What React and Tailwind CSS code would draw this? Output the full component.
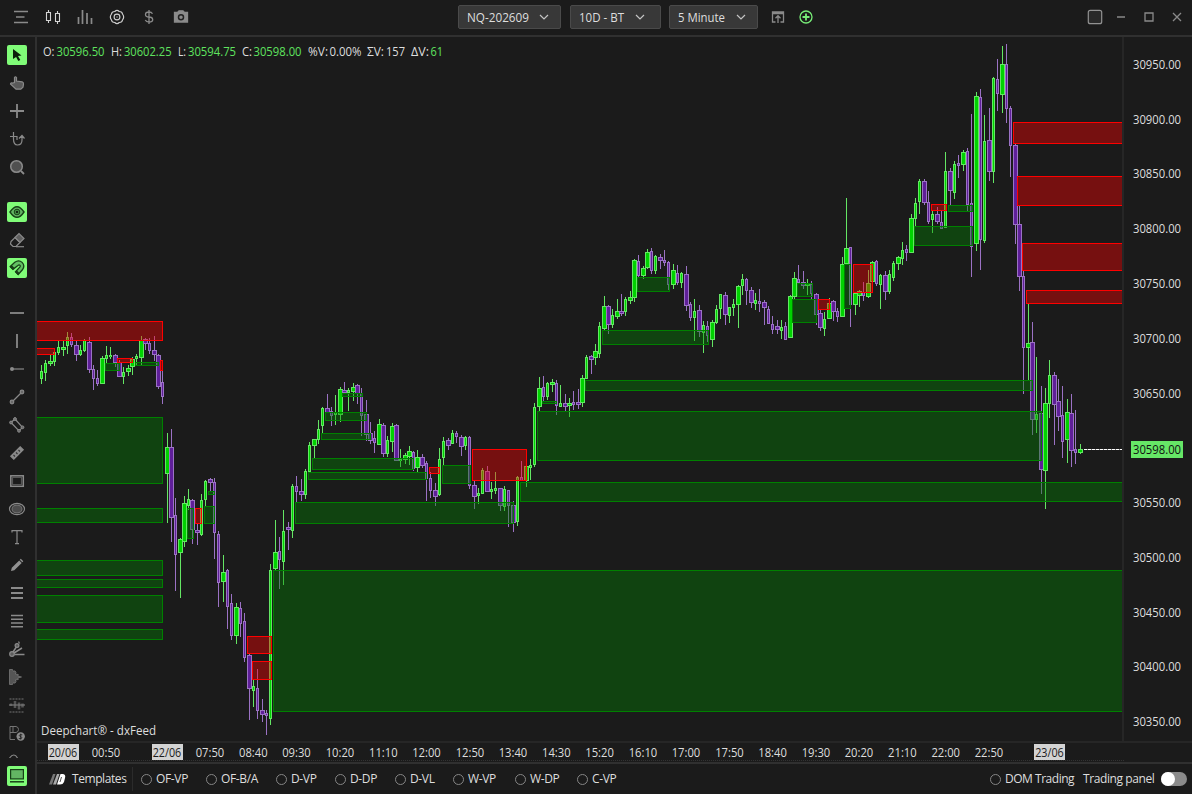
import React, { useState } from 'react';

// kind high top bottom low -- g = up, p = down, capital letter = wide body
const RAW_CANDLES = `
g 365 371 379 384,g 360 363 373 381,G 355 361 364 366,g 352 352 362 366,g 341 347 353 355,G 341 347 350 356,
g 332 337 346 354,p 333 337 345 347,P 341 345 355 361,g 345 350 355 356,g 339 340 351 352,P 337 342 370 373,
p 365 369 379 390,p 370 378 384 386,G 356 358 384 384,g 346 355 359 363,g 347 355 357 359,P 354 355 363 367,
P 360 362 377 377,g 367 372 377 384,G 365 368 372 376,G 357 359 367 375,g 354 356 359 366,G 336 340 358 365,
P 338 339 344 350,p 338 343 351 354,P 336 350 355 361,P 354 355 387 389,p 370 382 397 404,G 433 447 474 523,
P 429 447 518 542,p 498 515 555 591,G 538 539 553 598,G 496 503 542 547,g 489 499 506 510,P 499 500 530 544,
P 523 530 533 545,g 494 500 535 536,g 480 481 500 506,P 478 479 483 491,p 478 482 533 559,p 531 534 583 607,
G 555 572 582 602,p 569 570 607 629,p 594 603 636 640,G 603 607 636 644,p 602 608 624 637,p 613 621 658 662,
P 653 655 689 720,g 680 686 691 707,p 669 688 711 719,P 699 710 715 722,p 710 713 716 735,g 564 570 719 725,
G 520 552 569 570,p 537 551 560 589,g 510 531 562 585,P 522 527 530 550,g 484 486 531 538,p 476 486 492 502,
P 479 491 495 501,g 469 471 495 499,g 442 445 472 472,G 439 439 446 458,g 420 429 440 444,g 407 408 426 433,
P 394 408 413 413,p 407 411 416 426,g 395 412 415 425,G 387 389 415 422,P 382 390 393 394,g 388 390 393 411,
G 383 387 392 401,P 384 385 394 404,p 388 393 416 436,P 400 414 435 441,P 422 433 441 444,p 431 438 443 453,
G 419 424 445 445,P 423 425 454 457,g 436 440 454 457,G 423 426 442 452,P 424 425 461 461,g 449 459 461 467,
G 453 455 460 464,G 446 451 457 465,p 451 452 469 471,G 450 457 468 472,P 454 457 466 468,p 461 463 479 501,
p 472 478 491 498,P 483 490 497 506,g 448 459 495 496,g 437 441 458 465,P 438 440 446 450,g 430 433 444 444,
p 431 433 437 443,P 435 437 447 456,g 436 437 446 450,p 436 437 486 489,P 481 485 497 509,g 488 493 496 504,
g 468 470 494 494,P 466 471 492 492,g 482 489 492 499,g 472 488 491 494,P 488 488 506 511,g 486 489 507 511,
p 490 490 506 527,P 501 505 523 532,g 476 477 522 526,p 461 477 481 481,G 466 466 481 487,g 459 465 468 480,
g 403 407 465 467,G 377 388 407 411,p 376 387 397 401,g 382 383 397 400,G 379 382 385 392,p 380 383 406 415,
g 385 403 407 407,P 394 403 407 411,G 398 403 406 417,p 391 402 405 410,P 389 402 405 409,G 375 378 403 407,
g 355 357 379 379,P 355 356 360 374,G 344 351 358 365,g 322 326 354 358,G 296 306 329 330,P 305 306 325 334,
g 309 315 325 328,G 299 311 317 319,P 294 311 314 316,g 297 299 312 316,G 291 297 301 304,G 259 260 298 302,
p 255 261 276 278,G 266 268 276 279,G 249 252 268 269,p 248 251 271 274,g 255 256 271 274,P 254 257 261 269,
p 250 260 263 266,p 261 262 285 290,G 264 270 285 289,p 265 273 283 285,g 272 273 283 288,P 266 274 306 311,
p 302 304 318 321,g 299 311 318 341,P 305 310 332 337,g 321 325 333 353,p 321 326 336 342,G 320 322 340 347,
g 305 309 323 324,g 294 294 309 319,P 292 295 315 325,g 307 307 316 323,g 299 304 308 316,G 285 286 305 328,
g 274 279 286 295,p 278 279 291 305,P 287 290 303 308,g 293 300 304 310,p 289 301 304 312,P 300 302 308 325,
p 306 309 324 324,p 316 324 330 334,P 320 326 330 334,g 320 327 331 339,p 322 326 340 340,G 295 296 338 338,
G 272 278 297 299,p 265 279 283 283,P 271 282 286 289,G 279 283 286 295,p 281 284 294 299,P 293 294 315 325,
P 310 313 328 331,g 312 319 329 336,G 298 303 319 319,P 300 301 312 321,p 308 311 317 322,G 257 264 317 317,
G 198 248 264 264,p 247 247 305 327,G 292 293 305 315,G 290 291 296 307,p 282 292 296 301,G 270 283 297 298,
G 261 262 282 282,p 260 261 284 286,g 274 275 285 309,P 271 275 292 300,g 270 274 292 294,g 261 263 278 281,
G 256 257 264 270,g 242 250 259 265,p 245 249 253 261,G 214 218 253 253,g 198 203 219 226,g 179 181 202 214,
P 179 181 203 205,p 191 202 222 224,g 211 214 220 233,P 207 214 222 224,p 211 222 229 229,g 152 171 228 228,
P 168 171 191 205,g 161 164 193 199,p 155 163 166 178,G 150 152 165 171,p 148 151 205 211,p 114 203 247 277,
G 92 96 244 251,p 89 97 240 270,g 115 141 241 243,P 108 140 172 181,g 77 78 172 183,p 59 79 94 111,
G 46 64 95 113,p 44 64 109 123,p 106 108 146 177,P 144 145 225 244,P 206 224 277 291,p 271 276 348 394,
G 304 343 348 380,P 322 342 420 435,g 357 414 420 433,P 386 413 470 494,G 388 403 471 509,g 360 375 404 418,
P 372 375 405 445,P 379 401 417 431,p 386 415 442 458,G 399 412 440 463,P 394 413 451 467,p 410 449 453 464,
G 444 449 453 454`;

const CANDLES = RAW_CANDLES.trim().split(',').map((row, i) => {
  const [kind, ...v] = row.trim().split(' ');
  const [high, top, bottom, low] = v.map(Number);
  return {
    x: Math.round(41.05 + i * 4.327),
    half: kind === kind.toUpperCase() ? 2 : 1,
    up: kind.toLowerCase() === 'g',
    high, top, bottom, low,
  };
});

// x1, y1, x2, y2
const GREEN_ZONES = [
  [36, 417, 163, 484], [36, 508, 163, 523], [36, 560, 163, 576], [36, 579, 163, 588],
  [36, 595, 163, 623], [36, 629, 163, 640], [105, 363, 120, 371], [135, 362, 159, 366],
  [187, 508, 194, 539], [204, 506, 215, 524], [208, 491, 215, 495],
  [273, 570, 1124, 712], [295, 502, 514, 524], [308, 472, 427, 480], [312, 458, 414, 470],
  [321, 433, 371, 440], [325, 412, 367, 421], [342, 393, 363, 397], [442, 465, 471, 484],
  [520, 482, 1124, 502], [537, 411, 1042, 461], [542, 401, 557, 404], [585, 380, 1033, 391],
  [602, 330, 709, 345], [637, 277, 670, 292], [792, 299, 817, 323], [797, 283, 813, 297],
  [844, 264, 851, 309], [914, 226, 973, 246], [948, 205, 973, 212],
];

const RED_ZONES = [
  [36, 321, 163, 341], [36, 348, 55, 355], [117, 358, 133, 363], [160, 360, 163, 371],
  [195, 508, 202, 524], [247, 636, 272, 654], [252, 661, 272, 680], [429, 467, 440, 474],
  [472, 449, 527, 481], [818, 299, 830, 310], [853, 264, 873, 293], [931, 204, 947, 211],
  [1013, 122, 1124, 144], [1017, 176, 1124, 206], [1022, 243, 1124, 271], [1026, 290, 1124, 304],
];

const OHLC = [
  ['O:', 43, 11.5, 'w'], ['30596.50', 56.5, 48, 'g'],
  ['H:', 111, 11, 'w'], ['30602.25', 124, 47.5, 'g'],
  ['L:', 178, 8, 'w'], ['30594.75', 188, 48, 'g'],
  ['C:', 242, 10, 'w'], ['30598.00', 253.5, 48, 'g'],
  ['%V:', 308, 20, 'w'], ['0.00%', 329.5, 32, 'w'],
  ['ΣV:', 367, 17, 'w'], ['157', 386, 19, 'w'],
  ['ΔV:', 411, 18, 'w'], ['61', 430.5, 12.5, 'g'],
];

const PRICES = Array.from({ length: 13 }, (_, i) => 30950 - i * 50).filter((p) => p !== 30600);

const TIMES = [
  ['20/06', 63, true], ['00:50', 106], ['22/06', 167, true], ['07:50', 210], ['08:40', 253.3],
  ['09:30', 296.5], ['10:20', 340], ['11:10', 383.3], ['12:00', 426.5], ['12:50', 470],
  ['13:40', 513], ['14:30', 556.3], ['15:20', 599.6], ['16:10', 643], ['17:00', 686],
  ['17:50', 729.5], ['18:40', 772.6], ['19:30', 816], ['20:20', 859], ['21:10', 902.4],
  ['22:00', 945.7], ['22:50', 989], ['23/06', 1049.500, true],
];

const TEMPLATES = [
  ['OF-VP', 'w-[65px]'], ['OF-B/A', 'w-[70px]'], ['D-VP', 'w-[59px]'], ['D-DP', 'w-[60px]'],
  ['D-VL', 'w-[58px]'], ['W-VP', 'w-[62px]'], ['W-DP', 'w-[62px]'], ['C-VP', 'w-[60px]'],
];

const Label = ({ width, children, ...props }) => (
  <text textLength={width} lengthAdjust="spacingAndGlyphs" {...props}>{children}</text>
);

const Zone = ({ box: [x1, y1, x2, y2], color }) => (
  <rect
    x={x1 + 0.5}
    y={y1 + 0.5}
    width={x2 - x1 - 1}
    height={y2 - y1 - 1}
    fill={color}
    fillOpacity="0.4"
    stroke={color}
  />
);

const Candle = ({ c }) => (
  <g>
    <rect x={c.x} y={c.high} width="1" height={c.low - c.high} fill={c.up ? '#64e664' : '#9b72c4'} />
    <rect
      x={c.x - c.half}
      y={c.top}
      width={c.half * 2 + 1}
      height={c.bottom - c.top}
      fill={c.up ? '#64e664' : '#9b72c4'}
    />
    <rect
      x={c.x - c.half + 1}
      y={c.top + 1}
      width={c.half * 2 - 1}
      height={Math.max(c.bottom - c.top - 2, 1)}
      fill={c.up ? '#00d200' : '#5f1f99'}
    />
  </g>
);

const Chart = () => (
  <svg className="block w-[1085px] h-[704px] shrink-0" viewBox="37 37 1085 704">
    <g shapeRendering="crispEdges">
      {CANDLES.map((c) => <Candle key={c.x} c={c} />)}
      {GREEN_ZONES.map((z) => <Zone key={z.join()} box={z} color="#008000" />)}
      {RED_ZONES.map((z) => <Zone key={z.join()} box={z} color="#ff0000" />)}
      <path d="M1084 449.5H1122" stroke="#777" />
      <path d="M1084 449.5H1122" stroke="#fff" strokeDasharray="3 1" />
    </g>
    {OHLC.map(([text, x, w, tone]) => (
      <Label key={x} x={x} y="56" width={w} className={tone === 'g' ? 'fill-[#5fe35f]' : 'fill-[#dedede]'}>
        {text}
      </Label>
    ))}
    <Label x="41" y="735" width="115" className="fill-[#dedede]">Deepchart® - dxFeed</Label>
  </svg>
);

const PriceAxis = () => (
  <svg className="block w-[68px] h-[704px] shrink-0" viewBox="1124 37 68 704">
    {PRICES.map((p) => (
      <Label key={p} x="1133" y={Math.round(68.85 + (30950 - p) * 1.0955)} width="48" className="fill-[#dedede]">
        {p.toFixed(2)}
      </Label>
    ))}
    <rect x="1131" y="441" width="52" height="17" fill="#66e666" />
    <Label x="1133" y="454" width="48" className="fill-[#111]">30598.00</Label>
  </svg>
);

const TimeAxis = () => (
  <svg className="block w-[1155px] h-[19px]" viewBox="37 743 1155 19">
    {TIMES.map(([t, x, day]) => (
      <g key={t}>
        {day && <rect x={Math.round(x - 15.5)} y="744" width="31" height="16" fill="#d3d3d3" />}
        <Label x={x - 14.3} y="757" width="28.6" className={day ? 'fill-[#1b1b1b]' : 'fill-[#dedede]'}>
          {t}
        </Label>
      </g>
    ))}
    <path d="M37 760.5H1124" stroke="#333" strokeDasharray="1 1" />
  </svg>
);

const Icon = ({ children, active }) => (
  <div className="flex h-7 w-full shrink-0 items-center justify-center">
    <div className={`h-5 w-5 rounded-[2px] ${active ? 'bg-[#80fc78]' : ''}`}>
      <svg
        viewBox="0 0 20 20"
        className="block h-5 w-5"
        fill="none"
        stroke={active ? '#174017' : '#8a8a8a'}
        strokeWidth="1.2"
      >
        {children}
      </svg>
    </div>
  </div>
);

const Sidebar = () => (
  <div className="flex w-[37px] shrink-0 flex-col border-r-2 border-[#303030] pr-px">
    <div className="flex h-[722px] flex-col overflow-hidden pt-1">
      <Icon active><path d="M6 4l8.500 6.500-3.500.6 2.300 3.900-2 1-2.200-4L6 14z" fill="#0b1f0b" stroke="none" /></Icon>
      <Icon>
        <path d="M7.500 9.500V4.500q.9-1.500 2 0V8l5.700.9q1.600.6 1.300 2.300l-.5 3-2.200 2H9L3.500 11q.2-1.500 1.900-.9z" fill="#5a5a5a" />
      </Icon>
      <Icon><path d="M10 3v14M3 10h14" strokeWidth="1.8" /></Icon>
      <Icon><path d="M3 7.500h7M6.500 3v7q0 6 4 6 4.500 0 4.500-5V7M12 9.500l3-3 2.500 3M10 7v4" /></Icon>
      <Icon>
        <circle cx="9.500" cy="9.500" r="5.800" fill="#505050" strokeWidth="1.5" />
        <path d="M14 14l3 3" strokeWidth="1.8" />
      </Icon>
      <div className="h-[17px] shrink-0" />
      <Icon active>
        <path d="M3 10q7-10.500 14 0-7 10.500-14 0z" fill="#63b563" strokeWidth="1.4" />
        <circle cx="10" cy="10" r="2.800" fill="#4c9c4c" strokeWidth="1" />
        <circle cx="10" cy="10" r="1.300" fill="#102a10" stroke="none" />
      </Icon>
      <Icon>
        <path d="M4 11.500l4-4 5 5-4 4H6l-2.500-2.500z" />
        <path d="M8 7.500l4-4 5 5-4 4z" fill="#606060" />
        <path d="M9 16.700h8" />
      </Icon>
      <Icon active>
        <path
          d="M3.200 8.500l4.600-4.200q4-3 7.300.1 3.300 3.400.3 7.400l-4.200 4.700-2.700-2.700 4.300-4.600q1-1.300.1-2-.8-.8-2 .2L6 11.300z"
          fill="#63c063"
          strokeWidth="1.300"
        />
        <path d="M3.700 8l3 3M9 13.300l2.800 2.800" strokeWidth="2.600" />
      </Icon>
      <div className="h-[17px] shrink-0" />
      <Icon><path d="M3 10h14" strokeWidth="1.8" /></Icon>
      <Icon><path d="M10 3v14" strokeWidth="1.8" /></Icon>
      <Icon><path d="M5 10h12" /><circle cx="5" cy="10" r="2" fill="#8a8a8a" stroke="none" /></Icon>
      <Icon>
        <path d="M5 15L15 5" />
        <g fill="#6a6a6a"><circle cx="5" cy="15" r="1.800" /><circle cx="15" cy="5" r="1.800" /></g>
      </Icon>
      <Icon>
        <path d="M8 4l7.500 8.300M4 7.500l8 8.300M8 4L4 7.500M15.500 12.300L12 15.800" />
        <g fill="#6a6a6a" strokeWidth="1">
          <circle cx="8" cy="4" r="1.400" /><circle cx="15.500" cy="12.300" r="1.400" />
          <circle cx="4" cy="7.500" r="1.400" /><circle cx="12" cy="15.800" r="1.400" />
        </g>
      </Icon>
      <Icon>
        <path d="M3.800 13.200l9.400-9.400 3 3-9.400 9.400z" fill="#8a8a8a" />
        <path d="M6.500 12l1.500 1.500M9 9.500l1.500 1.500M11.500 7L13 8.500" stroke="#333" />
      </Icon>
      <Icon><rect x="3.800" y="4.800" width="12.500" height="10.500" strokeWidth="1.500" /><path d="M5.500 6.500h9v7h-9z" stroke="#555" /></Icon>
      <Icon><ellipse cx="10" cy="10" rx="7.500" ry="5.700" /><ellipse cx="10" cy="10" rx="5" ry="3.800" fill="#4c4c4c" stroke="#707070" /></Icon>
      <Icon><path d="M5 5.500V3.600h10v1.900M10 3.600v13M8 16.600h4" /></Icon>
      <Icon><path d="M4 16l.8-3.200 7.400-7.400 2.500 2.500-7.400 7.400zM12.800 4.800l1-1 2.500 2.500-1 1z" fill="#929292" stroke="none" /></Icon>
      <Icon><path d="M4 5h12M4 10h12M4 15h12" strokeWidth="2" /></Icon>
      <Icon><path d="M4 4.500h12M4 8.200h12M4 12h12M4 15.700h12" strokeWidth="1.400" /></Icon>
      <Icon>
        <path d="M6 13l4-6M7 14l8-5M7.500 15.600H17.500" strokeWidth="1.500" />
        <circle cx="5" cy="15" r="2.300" fill="#5d5d5d" /><circle cx="10" cy="6.500" r="1.900" fill="#5d5d5d" /><path d="M11.500 2.500l1 2" />
      </Icon>
      <Icon>
        <path
          d="M2.500 2.500h3l1 2 1.500-.7 1 1.700-.7 1.500 3 .5-.5 1.500 3.700 1-3.700 1 .5 1.500-3 .5.7 1.500-1 1.700-1.500-.7-1 2h-3z"
          fill="#555"
          stroke="#777"
          strokeWidth=".8"
        />
      </Icon>
      <Icon>
        <path d="M2.500 4h15M2.500 17h15" strokeWidth="1" strokeDasharray="2 1" stroke="#777" />
        <path d="M4 8.500v2.500M8 6v7M12 7.500v7M15.500 8.500v4" stroke="#555" strokeWidth="2.600" />
        <path d="M2 10h16" stroke="#777" />
      </Icon>
      <Icon>
        <path d="M3 16.500V3.500h6q2.500.5 2.500 3T9 9.500H3M6 3.500v6M3 16.500h5" stroke="#747474" strokeWidth="1" />
        <circle cx="13.700" cy="13.500" r="4.200" fill="#8c8c8c" stroke="none" />
        <path d="M15.300 11.800h-2.500q-1.200 1 .2 1.700l1.200.3q1.300.9 0 1.800h-2.400M13.700 10.700v5.800" stroke="#222" strokeWidth=".9" />
      </Icon>
      <Icon><path d="M2.500 7q4.500-6 8 0" /></Icon>
    </div>
    <div className="flex h-9 items-center">
      <Icon active>
        <rect x="3.600" y="3.600" width="12.800" height="9.300" fill="#63b563" />
        <path d="M3 15.800h14" strokeWidth="1.500" />
      </Icon>
    </div>
  </div>
);

const Select = ({ label, textWidth, className }) => (
  <button
    type="button"
    className={`flex h-6 items-center justify-between rounded-[2px] border border-[#4a4a4a] bg-[#383838] pl-2 ${className}`}
  >
    <svg className="h-5 w-16 overflow-visible" viewBox="0 0 64 20">
      <Label x="0" y="15" width={textWidth} className="fill-[#dedede]">{label}</Label>
    </svg>
    <svg className="-ml-4 h-3 w-3 shrink-0" viewBox="0 0 12 12" fill="none" stroke="#c4c4c4" strokeWidth="1.2">
      <path d="M2 4l4 4 4-4" />
    </svg>
  </button>
);

const TopIcon = ({ children, color = '#8a8a8a' }) => (
  <svg className="h-5 w-5" viewBox="0 0 20 20" fill="none" stroke={color} strokeWidth="1.3">{children}</svg>
);

const TitleBar = () => (
  <header className="flex h-[37px] shrink-0 items-center border-b-2 border-[#303030] pb-px">
    <div className="flex w-[458px] gap-3 pl-[11px]">
      <TopIcon><path d="M3 4.500h14M5 10h8.500M3 15.500h14" /></TopIcon>
      <TopIcon color="#d4d4d4">
        <path d="M3.500 5.500h4v8h-4zM5.500 3v2.500M5.500 13.500V16M12.500 6.500h4v8h-4zM14.500 4v2.500M14.500 14.500V17" strokeWidth="1.1" />
      </TopIcon>
      <TopIcon><path d="M3.500 10v7M7.500 3v14M12 6v11M16.500 11v6" strokeWidth="1.700" /></TopIcon>
      <TopIcon color="#cfcfcf">
        <path
          d="M7.800 4.500Q10 2.300 12.200 4.500q3 0 3.300 2.500 2.300 3 0 6-.3 2.500-3.300 2.500-2.200 2.200-4.400 0-3 0-3.300-2.500-2.300-3 0-6 .3-2.500 3.300-2.500z"
          strokeWidth="1.200"
        />
        <circle cx="10" cy="10" r="2.900" strokeWidth="1.100" />
        <circle cx="10" cy="10" r=".8" fill="#999" stroke="none" />
      </TopIcon>
      <TopIcon><path d="M13.500 6.800Q12.500 5 10 5 6.500 5 6.500 7.500T10 10t3.700 2.500T10 15q-2.800 0-3.700-2M10 3v14" /></TopIcon>
      <TopIcon>
        <path d="M3.500 5.500h3L8 3.800h4l1.500 1.700h3V15h-13z" fill="#8b8b8b" />
        <circle cx="10" cy="10.200" r="2.500" stroke="#222" strokeWidth="1.500" />
      </TopIcon>
    </div>
    <div className="flex items-center gap-2">
      <Select label="NQ-202609" textWidth={62} className="w-[103px] pr-2.5" />
      <Select label="10D - BT" textWidth={45} className="ml-px w-[91px] pr-3.5" />
      <Select label="5 Minute" textWidth={47} className="w-[89px] pr-2.5" />
    </div>
    <div className="ml-2.5 flex gap-2">
      <TopIcon><path d="M7.500 15H4.500V5h11v10h-3M4.500 6.500h11M10 16V9M7.500 11.200L10 8.700l2.500 2.500" /></TopIcon>
      <TopIcon color="#78ee78"><circle cx="10" cy="10" r="6" /><path d="M10 6.500v7M6.500 10h7" strokeWidth="1.800" /></TopIcon>
    </div>
    <div className="ml-auto flex items-center gap-2 pr-[5px]">
      <svg className="-mr-0.5 h-5 w-5" viewBox="0 0 20 20" fill="#292929" stroke="#929292" strokeWidth="1.200">
        <rect x="3.300" y="3.300" width="13.400" height="13.400" rx="2" />
      </svg>
      <TopIcon><path d="M6 10h8" strokeWidth="1.500" /></TopIcon>
      <TopIcon><path d="M6 6h8v8H6z" /></TopIcon>
      <TopIcon><path d="M6 6l8 8M14 6l-8 8" /></TopIcon>
    </div>
  </header>
);

const Radio = () => <span className="h-[11px] w-[11px] shrink-0 rounded-full border border-[#858585]" />;

const BottomBar = () => {
  const [selected, setSelected] = useState(null);
  const [panelOpen, setPanelOpen] = useState(false);

  return (
    <footer className="flex h-8 items-center border-t-2 border-[#303030] text-[#dedede]">
      <svg className="ml-3 h-3 w-[18px] shrink-0" viewBox="0 0 18 12">
        <path d="M4 1h2.500L3 11.500H0z" fill="#777" />
        <path d="M8 1h2.500L7 11.500H4z" fill="#aaa" />
        <path d="M11.500 1H14q3 .5 2 4l-1 4q-1 2.500-4 2.500H8z" fill="#fff" />
        <path d="M12.500 4l-1.500 5" stroke="#555" />
      </svg>
      <span className="ml-[5px] w-[60px] shrink-0 tracking-[-0.42px]">Templates</span>
      <span className="h-6 w-px bg-[#2b2b2b]" />
      <div className="ml-2 flex">
        {TEMPLATES.map(([name, width]) => (
          <button
            key={name}
            type="button"
            onClick={() => setSelected(selected === name ? null : name)}
            className={`flex shrink-0 items-center gap-1 tracking-[-0.35px] whitespace-nowrap ${width} ${selected === name ? 'text-[#66e666]' : ''}`}
          >
            <Radio />
            {name}
          </button>
        ))}
      </div>
      <div className="ml-auto flex items-center pr-[5px] whitespace-nowrap">
        <Radio />
        <span className="ml-1 w-[78px] tracking-[-0.48px]">DOM Trading</span>
        <span className="w-[78px] tracking-[-0.4px]">Trading panel</span>
        <button
          type="button"
          onClick={() => setPanelOpen(!panelOpen)}
          className={`flex h-[14px] w-[26px] items-center rounded-full bg-[#8b8b8b] ${panelOpen ? 'justify-end' : ''}`}
        >
          <span className="h-[14px] w-[14px] rounded-full bg-white" />
        </button>
      </div>
    </footer>
  );
};

export default function App() {
  return (
    <div className="flex h-screen w-screen flex-col overflow-hidden bg-[#1b1b1b] font-['Open_Sans','Noto_Sans',sans-serif] text-[12px] select-none">
      <TitleBar />
      <div className="flex min-h-0 flex-1">
        <Sidebar />
        <main className="flex min-w-0 flex-1 flex-col">
          <div className="flex">
            <Chart />
            <div className="w-0.5 shrink-0 bg-[#262626]" />
            <PriceAxis />
          </div>
          <div className="h-0.5 shrink-0 bg-[#262626]" />
          <TimeAxis />
          <BottomBar />
        </main>
      </div>
    </div>
  );
}
